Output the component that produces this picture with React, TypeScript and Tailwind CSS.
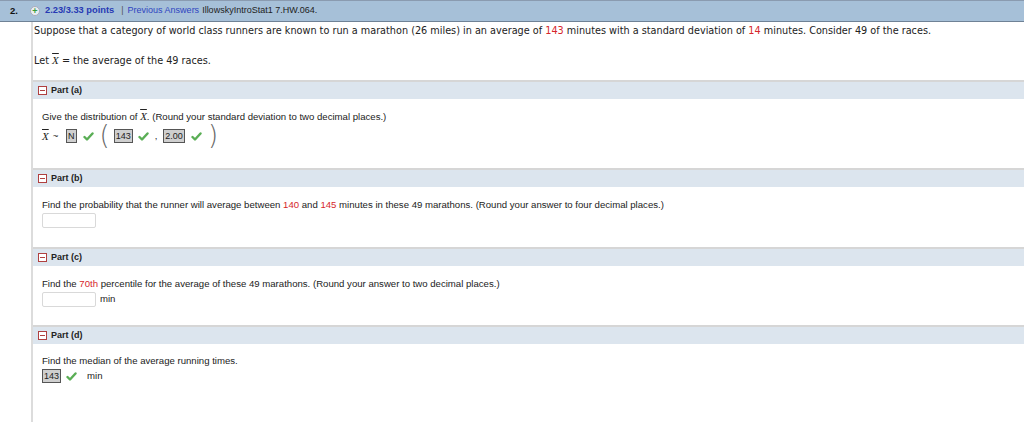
import React from "react";

const Check = () => (
  <svg width="11" height="9" viewBox="0 0 11 9" className="inline-block">
    <path d="M1.5 5 L4 7.5 L9.5 1.5" fill="none" stroke="#5aae55" strokeWidth="2.4" strokeLinecap="round" strokeLinejoin="round" />
  </svg>
);

const Box = ({ children }: { children: React.ReactNode }) => (
  <span className="inline-flex items-center h-[14px] px-[1px] bg-[#cfcfcf] border border-[#555] leading-none text-[9px]">{children}</span>
);

const XBar = () => (
  <span className="italic font-['Liberation_Serif',serif] text-[11px] overline">X</span>
);

const PartHeader = ({ label }: { label: string }) => (
  <div className="h-[19px] border-t-2 border-[#d6d6d6] bg-[#dce5ee] flex items-center pl-[5px] gap-[4px]">
    <span className="w-[9px] h-[9px] border border-[#b04040] bg-white flex items-center justify-center">
      <span className="w-[5px] h-[1px] bg-[#b04040]" />
    </span>
    <span className="font-bold text-[9px] text-[#222]">{label}</span>
  </div>
);

const Input = () => <span className="inline-block w-[54px] h-[15px] border border-[#d9d9d9] rounded-[2px] bg-white" />;

export default function App() {
  return (
    <div className="w-[1024px] h-[422px] bg-white overflow-hidden font-['Liberation_Sans',Arial,sans-serif] text-[#222]">
      <div className="h-[22px] bg-[#a6c0d8] border-t border-[#8a9bb0] border-b border-b-[#6f8296] flex items-center text-[9px]">
        <span className="w-[30px] pl-[10px] font-bold text-[#111] text-[9.5px]">2.</span>
        <span className="w-[10px] h-[10px] rounded-full bg-[#e8eef2] border border-[#aab] flex items-center justify-center text-[#3a9a3a] text-[9px] font-bold leading-none mr-[5px]">+</span>
        <span className="font-bold text-[#2639b4] text-[9.3px]">2.23/3.33 points</span>
        <span className="text-[#555] ml-[7px] mr-[4px]">|</span>
        <span className="text-[#2f44c0] mr-[3px]">Previous Answers</span>
        <span className="text-[#222]">IllowskyIntroStat1 7.HW.064.</span>
      </div>
      <div className="flex">
        <div className="w-[31px] shrink-0" />
        <div className="flex-1 border-l-2 border-[#dcdcdc] h-[400px]">
          <div className="font-['DejaVu_Sans',Verdana,sans-serif] text-[9.7px] pl-[1px] pt-[1px]">
            <div className="h-[16px] flex items-center">
              <span>
                Suppose that a category of world class runners are known to run a marathon (26 miles) in an average of{" "}
                <span className="text-[#d6262c]">143</span> minutes with a standard deviation of{" "}
                <span className="text-[#d6262c]">14</span> minutes. Consider 49 of the races.
              </span>
            </div>
            <div className="h-[13px]" />
            <div className="h-[16px] flex items-center">
              <span>
                Let <span className="italic font-['Liberation_Serif',serif] text-[11px] overline">X</span> = the average of the 49 races.
              </span>
            </div>
            <div className="h-[12px]" />
          </div>

          <PartHeader label="Part (a)" />
          <div className="pl-[9px] text-[9.6px] pt-[10px] h-[69px]">
            <div className="h-[14px] flex items-center">
              <span>
                Give the distribution of <XBar />. (Round your standard deviation to two decimal places.)
              </span>
            </div>
            <div className="h-[24px] flex items-center mt-[1px]">
              <span className="flex items-center gap-[4px] w-[24px]"><XBar /> <span>~</span></span>
              <Box>N</Box>
              <span className="ml-[6px]"><Check /></span>
              <span className="text-[26px] font-['DejaVu_Sans',sans-serif] font-extralight leading-none ml-[6px] mt-[-3px] text-[#666]">(</span>
              <span className="ml-[4px]"><Box>143</Box></span>
              <span className="ml-[5px]"><Check /></span>
              <span className="ml-[6px]">,</span>
              <span className="ml-[6px]"><Box>2.00</Box></span>
              <span className="ml-[6px]"><Check /></span>
              <span className="text-[26px] font-['DejaVu_Sans',sans-serif] font-extralight leading-none ml-[6px] mt-[-3px] text-[#666]">)</span>
            </div>
          </div>

          <PartHeader label="Part (b)" />
          <div className="pl-[9px] text-[9.6px] pt-[11px] h-[60px]">
            <div className="h-[14px] flex items-center">
              <span>
                Find the probability that the runner will average between <span className="text-[#d6262c]">140</span> and{" "}
                <span className="text-[#d6262c]">145</span> minutes in these 49 marathons. (Round your answer to four decimal places.)
              </span>
            </div>
            <div className="mt-[1px]"><Input /></div>
          </div>

          <PartHeader label="Part (c)" />
          <div className="pl-[9px] text-[9.6px] pt-[11px] h-[59px]">
            <div className="h-[14px] flex items-center">
              <span>
                Find the <span className="text-[#d6262c]">70th</span> percentile for the average of these 49 marathons. (Round your answer to two decimal places.)
              </span>
            </div>
            <div className="mt-[1px] flex items-center gap-[4px]"><Input /><span>min</span></div>
          </div>

          <PartHeader label="Part (d)" />
          <div className="pl-[9px] text-[9.6px] pt-[10px]">
            <div className="h-[14px] flex items-center">
              <span>Find the median of the average running times.</span>
            </div>
            <div className="flex items-center mt-[1px]">
              <Box>143</Box>
              <span className="ml-[5px]"><Check /></span>
              <span className="ml-[10px]">min</span>
            </div>
          </div>
        </div>
      </div>
    </div>
  );
}
